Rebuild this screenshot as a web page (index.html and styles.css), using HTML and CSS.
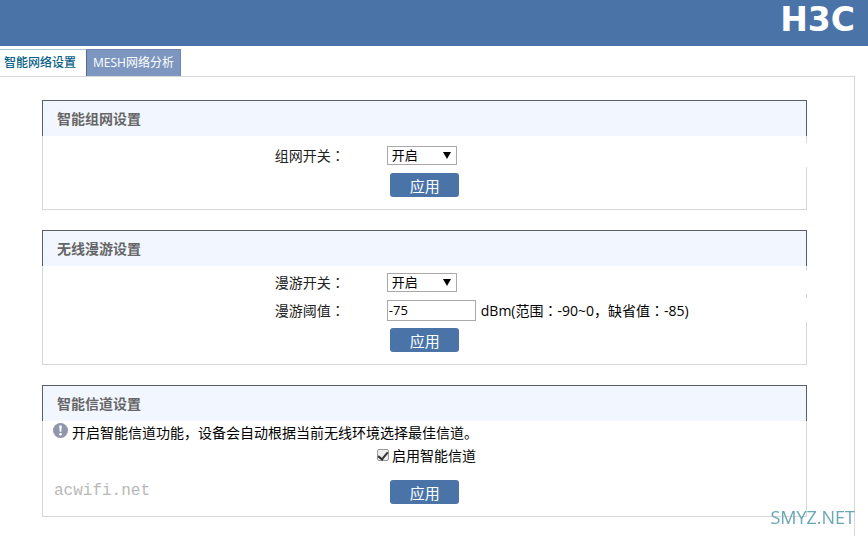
FILE: index.html
```html
<!DOCTYPE html>
<html lang="zh-CN">
<head>
  <meta charset="utf-8">
  <title>智能网络设置</title>
  <link rel="stylesheet" href="styles.css">
</head>
<body>
  <header class="header">
    <div class="logo">H3C</div>
  </header>

  <nav class="tabs">
    <a href="#" class="tab active">智能网络设置</a>
    <a href="#" class="tab">MESH网络分析</a>
  </nav>

  <main class="content">
    <section class="panel">
      <h2>智能组网设置</h2>
      <form class="panel-body mesh">
        <div class="row">
          <label for="mesh">组网开关<span class="colon" lang="zh-TW">：</span></label>
          <div class="field">
            <select id="mesh">
              <option>开启</option>
              <option>关闭</option>
            </select>
          </div>
        </div>
        <div class="actions"><button type="button">应用</button></div>
      </form>
    </section>

    <section class="panel">
      <h2>无线漫游设置</h2>
      <form class="panel-body roaming">
        <div class="row">
          <label for="roam">漫游开关<span class="colon" lang="zh-TW">：</span></label>
          <div class="field">
            <select id="roam">
              <option>开启</option>
              <option>关闭</option>
            </select>
          </div>
        </div>
        <div class="row">
          <label for="threshold">漫游阈值<span class="colon" lang="zh-TW">：</span></label>
          <div class="field">
            <input type="text" id="threshold" value="-75">
            <span class="hint">dBm(范围<span class="colon" lang="zh-TW">：</span>-90~0，缺省值<span class="colon" lang="zh-TW">：</span>-85)</span>
          </div>
        </div>
        <div class="actions"><button type="button">应用</button></div>
      </form>
    </section>

    <section class="panel">
      <h2>智能信道设置</h2>
      <form class="panel-body channel">
        <p class="note">
          <svg width="15" height="15" viewBox="0 0 15 15">
            <circle cx="7.5" cy="7.5" r="7.5" fill="#9097ad"/>
            <path d="M6.2 2.5h2.6l-.5 6.2H6.7z" fill="#fff"/>
            <circle cx="7.5" cy="11.2" r="1.3" fill="#fff"/>
          </svg>
          开启智能信道功能，设备会自动根据当前无线环境选择最佳信道。
        </p>
        <div class="check">
          <input type="checkbox" id="auto" checked>
          <label for="auto">启用智能信道</label>
        </div>
        <div class="actions"><button type="button">应用</button></div>
        <span class="source">acwifi.net</span>
      </form>
    </section>
  </main>

  <div class="watermark">SMYZ.NET</div>
</body>
</html>
```

FILE: styles.css
```css
* {
  box-sizing: border-box;
}

body {
  display: flex;
  flex-direction: column;
  min-height: 100vh;
  margin: 0;
  background: #fff;
  color: #222;
  font-family: "Open Sans", "Noto Sans CJK SC", sans-serif;
  font-size: 14px;
}

.header {
  display: flex;
  justify-content: flex-end;
  height: 46px;
  padding-right: 13px;
  background: #4a73a8;
}

.logo {
  color: #fff;
  font-family: "DejaVu Sans", sans-serif;
  font-size: 33px;
  font-weight: bold;
  line-height: 39px;
}

/* tabs */
.tabs {
  display: flex;
  margin-top: 3px;
  font-size: 12px;
}

.tab {
  height: 27px;
  padding: 0 6px;
  border: 1px solid #7088b0;
  border-width: 1px 1px 0 0;
  background: #7c96bf;
  color: #fff;
  line-height: 25px;
  text-decoration: none;
}

.tab.active {
  padding: 0 10px 0 4px;
  border-top-color: #a9c4d4;
  border-right-color: #56688a;
  background: #fff;
  color: #0a6287;
  font-weight: 500;
}

.content {
  flex: 1;
  margin-right: 13px;
  padding: 23px 47px 0 42px;
  border: solid #d5d8da;
  border-width: 1px 1px 0 0;
}

/* panels */
.panel {
  margin-bottom: 20px;
  border: 1px solid #d5d8da;
  border-top: 0;
}

.panel:last-child {
  margin-bottom: 0;
}

.panel h2 {
  height: 36px;
  margin: 0 -1px;
  padding-left: 14px;
  border: 1px solid #5a5e68;
  border-bottom: 0;
  background: #f2f6ff;
  color: #666;
  font-size: 14px;
  font-weight: bold;
  line-height: 36px;
}

.panel-body {
  position: relative;
  padding-bottom: 12px;
}

.mesh {
  padding-top: 7px;
}

.roaming {
  padding-top: 4px;
}

.row {
  display: grid;
  grid-template-columns: 45% 1fr;
  align-items: center;
  height: 24px;
  margin-right: -1px;
  background: #fff;
}

.row + .row {
  margin-top: 4px;
}

.row label {
  padding-right: 42px;
  line-height: 20px;
  text-align: right;
}

.colon {
  font-family: "Noto Sans CJK TC", sans-serif;
}

.field {
  display: flex;
  align-items: center;
}

.field select {
  width: 70px;
  height: 19px;
  padding: 0 4px;
  border: 1px solid #a9a9a9;
  border-radius: 0;
  appearance: none;
  background: #fff;
  color: #000;
  font-family: inherit;
  font-size: 13px;
  line-height: 17px;
}

/* drop-down arrow */
.field:has(select)::after {
  content: "";
  width: 0;
  margin-left: -14px;
  border: 4px solid transparent;
  border-top: 7px solid #000;
  border-bottom: 0;
  pointer-events: none;
}

.field input {
  width: 89px;
  height: 21px;
  padding: 0 1px;
  border: 1px solid #a9a9a9;
  color: #000;
  font-family: inherit;
  font-size: 13px;
}

.hint {
  margin-left: 5px;
  color: #000;
  line-height: 20px;
  white-space: nowrap;
}

.actions {
  display: flex;
  margin-top: 6px;
  padding-left: 45%;
}

button {
  width: 69px;
  height: 24px;
  margin-left: 4px;
  padding: 0;
  border: 0;
  border-radius: 3px;
  background: #4a73a8;
  color: #fff;
  font-family: inherit;
  font-size: 15px;
  line-height: 26px;
}

.note {
  display: flex;
  gap: 4px;
  margin: 0;
  padding: 2px 10px 0;
  color: #000;
  line-height: 20px;
}

.check {
  display: flex;
  justify-content: center;
  align-items: center;
  gap: 3px;
  height: 24px;
  padding-left: 4px;
  color: #000;
}

.check input {
  width: 12px;
  height: 12px;
  margin: 0;
  border: 1px solid #999;
  border-radius: 2px;
  appearance: none;
  background: #eee;
}

.check input:checked::after {
  content: "";
  display: block;
  width: 4px;
  height: 8px;
  margin: 0 0 0 2px;
  border: solid #333;
  border-width: 0 2px 2px 0;
  transform: rotate(40deg);
}

.channel .actions {
  margin-top: 13px;
}

.source {
  position: absolute;
  bottom: 16px;
  left: 11px;
  color: #b8b8b8;
  font-family: "Liberation Mono", monospace;
  font-size: 16px;
}

.watermark {
  position: fixed;
  right: 13px;
  bottom: 8px;
  color: #6aa7b5;
  font-size: 18px;
  line-height: 22px;
}
```
